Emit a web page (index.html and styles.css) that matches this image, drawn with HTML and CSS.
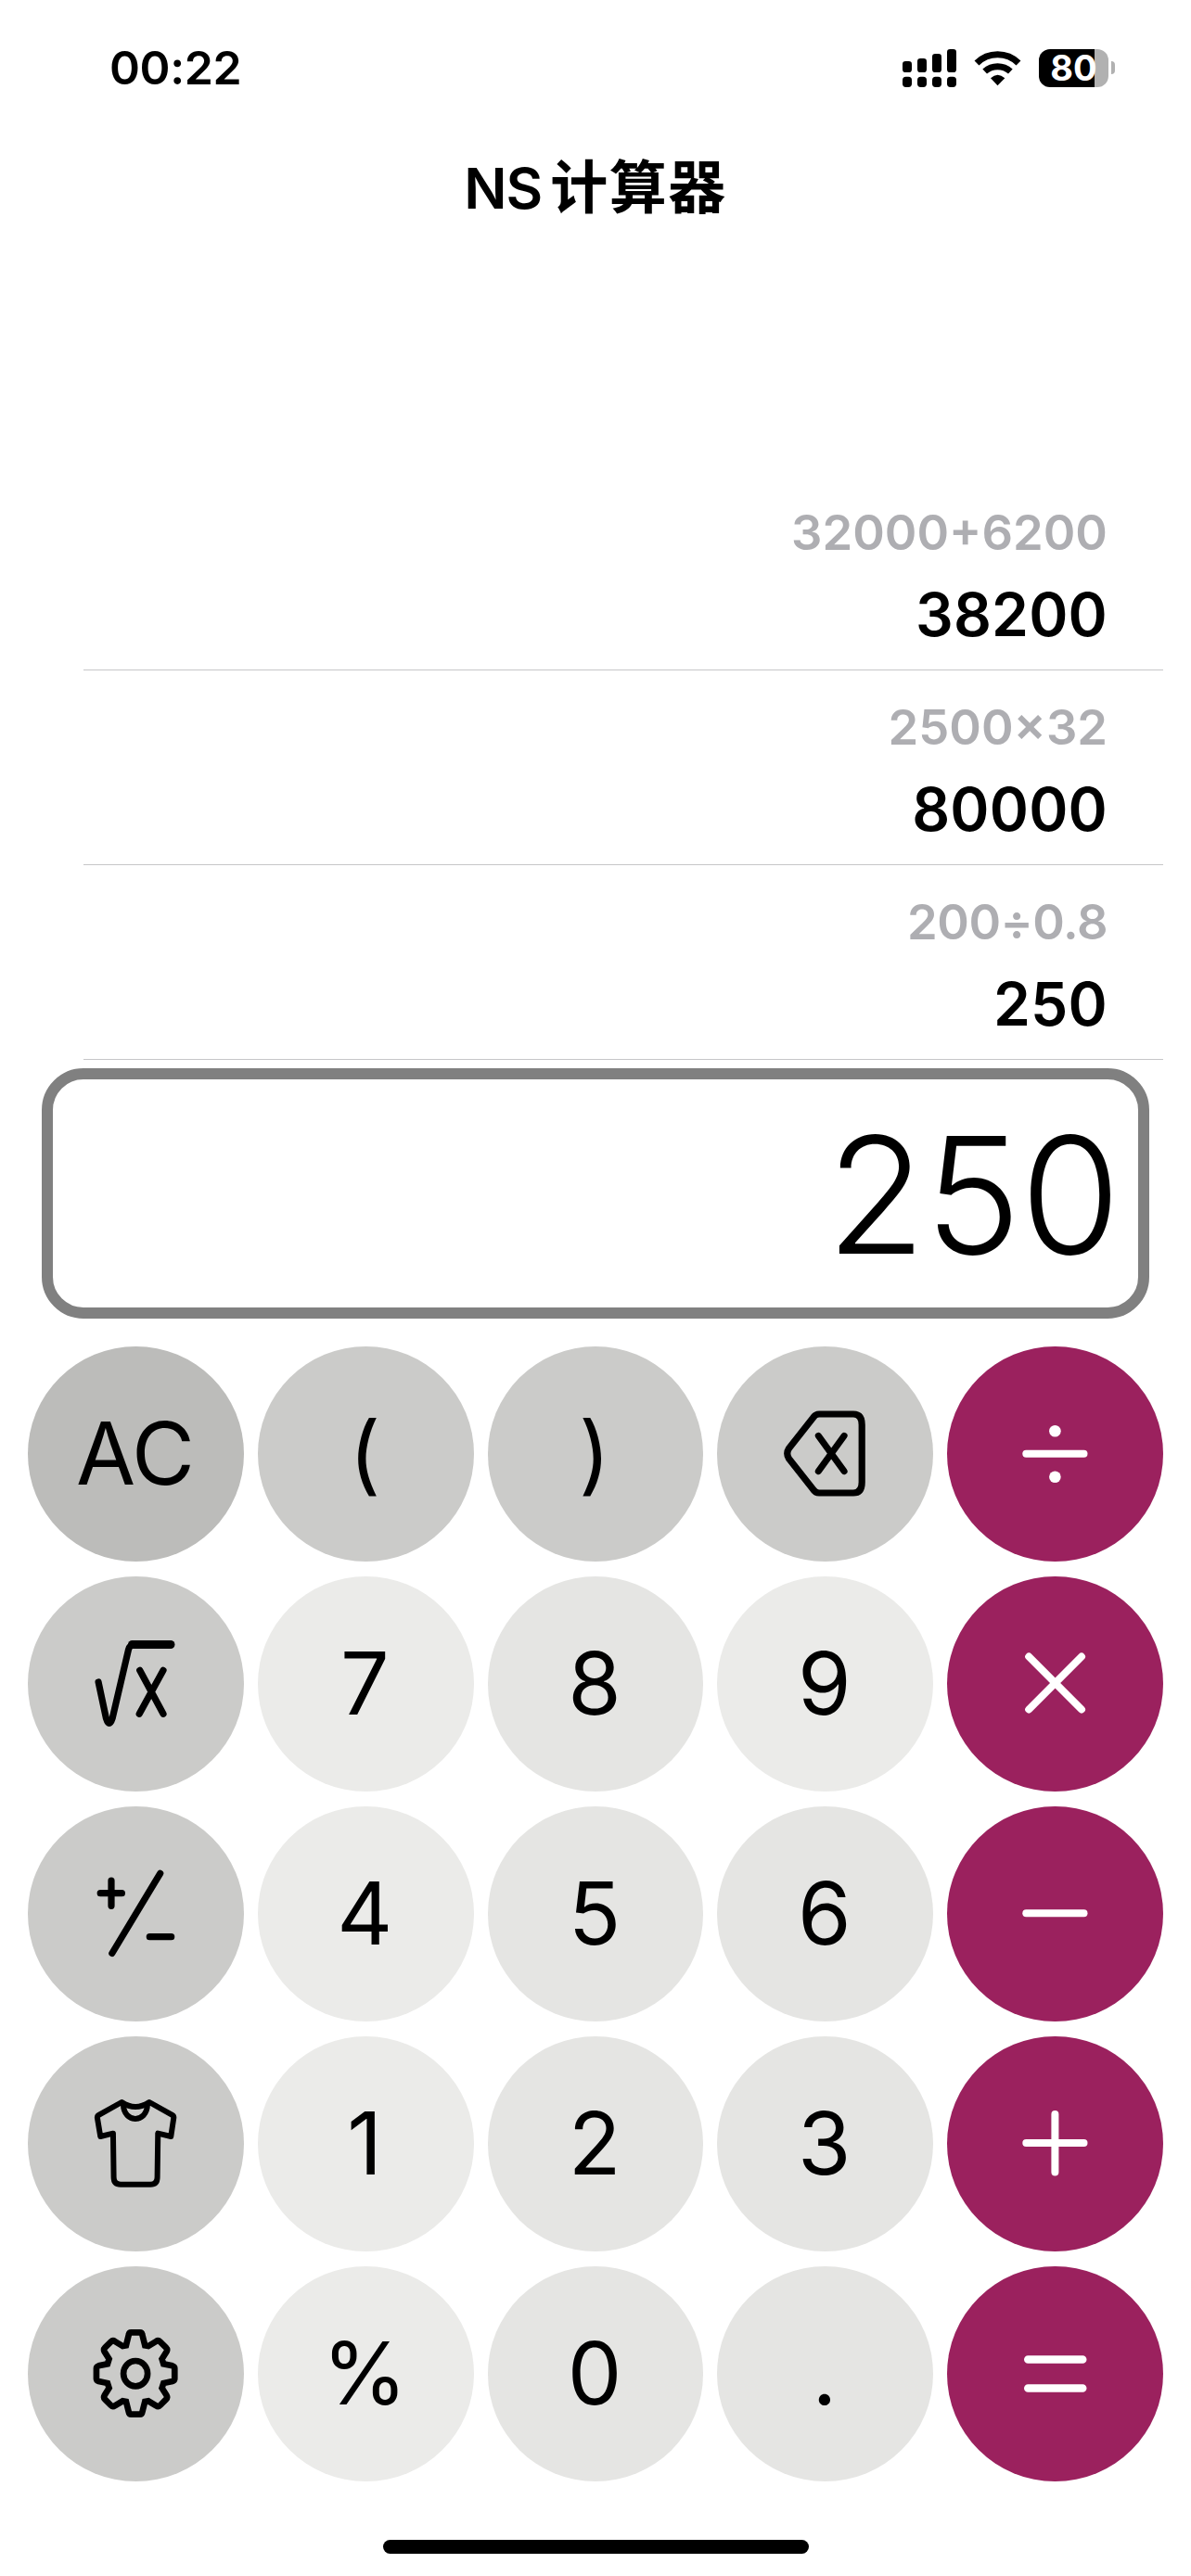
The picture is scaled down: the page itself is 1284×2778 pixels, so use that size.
FILE: index.html
```html
<!DOCTYPE html>
<html lang="zh-CN">
<head>
<meta charset="utf-8">
<title>NS计算器</title>
<link rel="stylesheet" href="styles.css">
</head>
<body>
<div class="phone">
  <header class="status">
    <span class="time">00:22</span>
    <div class="indicators">
      <svg class="signal" viewBox="99 66 174 123">
        <rect x="99" y="105" width="30" height="36" rx="10"/><rect x="147" y="96" width="30" height="45" rx="10"/>
        <rect x="195" y="81" width="30" height="60" rx="10"/><rect x="243" y="66" width="30" height="75" rx="10"/>
        <rect x="99" y="155" width="30" height="34" rx="11"/><rect x="147" y="155" width="30" height="34" rx="11"/>
        <rect x="195" y="155" width="30" height="34" rx="11"/><rect x="243" y="155" width="30" height="34" rx="11"/>
      </svg>
      <svg class="wifi" viewBox="330 66 153 123">
        <path class="arc" d="M339 111A96 96 0 0 1 474 111"/>
        <path class="arc" d="M365 138A62 62 0 0 1 448 138"/>
        <path d="M406.500 184L384 160Q406.500 138 430 160Z"/>
      </svg>
      <div class="battery"><div class="cell"><span>80</span></div><div class="cap"></div></div>
    </div>
  </header>
  <h1 class="title"><span class="latin">NS</span><span class="han">计算器</span></h1>

  <ul class="history">
    <li><span class="expr">32000+6200</span><span class="result">38200</span></li>
    <li><span class="expr">2500×32</span><span class="result">80000</span></li>
    <li><span class="expr tight">200÷0.8</span><span class="result">250</span></li>
  </ul>

  <div class="display"><span>250</span></div>

  <main class="keypad">
    <button class="key clear"><span class="ac">AC</span></button>
    <button class="key fn"><span>(</span></button>
    <button class="key fn"><span>)</span></button>
    <button class="key fn" aria-label="delete"><svg viewBox="0 0 100 100"><path d="M43 7H80Q89.200 7 89.200 18.500V80.500Q89.200 92 80 92H43Q39 92 36.500 88L10.500 55Q7 49.500 10.500 44L36.500 11Q39 7 43 7Z"/><path d="M42.400 30.500L70 68.500M70 30.500L42.400 68.500"/></svg></button>
    <button class="key op" aria-label="divide"><svg viewBox="0 0 100 100"><path d="M18.300 49.700H80.500"/><circle class="dot" cx="49.400" cy="25.300" r="6.300"/><circle class="dot" cx="49.400" cy="74.700" r="6.300"/></svg></button>

    <button class="key fn" aria-label="square root"><svg viewBox="0 0 100 100"><path d="M10.100 48L18.400 87Q21.700 98 25.200 87L42.500 13Q43.700 8 48 8"/><path class="bar" d="M46.500 7.500H88"/><path d="M54.700 35.300L80 82.300M80 35.300L54.200 82.300"/></svg></button>
    <button class="key light"><span>7</span></button>
    <button class="key"><span>8</span></button>
    <button class="key light"><span>9</span></button>
    <button class="key op" aria-label="multiply"><svg viewBox="0 0 100 100"><path d="M21.200 20.500L78 77.500M78 20.500L21.200 77.500"/></svg></button>

    <button class="key fn" aria-label="sign"><svg viewBox="0 0 100 100"><path d="M12.200 27.700H35.400M24 14V41.300M76.700 6.300L24.800 92.500M65.300 74.700H88.700"/></svg></button>
    <button class="key light"><span>4</span></button>
    <button class="key"><span>5</span></button>
    <button class="key"><span>6</span></button>
    <button class="key op" aria-label="minus"><svg viewBox="0 0 100 100"><path d="M18.300 49.300H80.500"/></svg></button>

    <button class="key fn" aria-label="theme"><svg class="shirt" viewBox="49.200 96 300 300"><path d="M155 111Q199 141 244 111L317 152Q324 156 323 162L314 222L272 212L270 354Q270 377 248 377H151Q129 377 129 354L127 212L86 222L76 162Q75 156 82 152Z"/><path d="M160 119C162 180 236 180 238 119"/></svg></button>
    <button class="key light"><span>1</span></button>
    <button class="key"><span>2</span></button>
    <button class="key"><span>3</span></button>
    <button class="key op" aria-label="plus"><svg viewBox="0 0 100 100"><path d="M18.300 49H80.500M49.400 18V80.500"/></svg></button>

    <button class="key fn" aria-label="settings"><svg class="gear" viewBox="49.200 60 300 300"><path d="M185 76H214Q220 76 221 82L230 118L241 120L266 105Q273 100 279 106L298 125Q304 131 300 138L285 162L290 178L319 184Q326 186 326 192V226Q326 232 319 234L290 240L285 256L300 280Q304 287 298 293L279 312Q273 318 266 313L241 298L230 300L221 335Q220 341 214 341H185Q179 341 178 335L169 300L158 298L133 313Q126 318 120 312L101 293Q95 287 99 280L114 256L109 240L80 234Q73 232 73 226V192Q73 186 80 184L109 178L114 162L99 138Q95 131 101 125L120 106Q126 100 133 105L158 120L169 118L178 82Q179 76 185 76Z"/><ellipse cx="199.500" cy="209" rx="39" ry="41"/></svg></button>
    <button class="key light"><span>%</span></button>
    <button class="key"><span>0</span></button>
    <button class="key"><span>.</span></button>
    <button class="key op equals" aria-label="equals"><svg viewBox="0 0 100 100"><path d="M20.300 34.500H79.200M20.300 65.500H79.200"/></svg></button>
  </main>
  <div class="home"></div>
</div>
</body>
</html>
```
FILE: styles.css
```css
* { box-sizing: border-box; }
body { margin: 0; background: #fff; color: #000; font-family: Inter, "Noto Sans CJK SC", sans-serif; }
.phone { width: 1284px; height: 2778px; display: flex; flex-direction: column; overflow: hidden; }

.status { height: 146px; padding: 0 82px 0 118px; display: flex; align-items: center; justify-content: space-between; }
.time { font-size: 50px; font-weight: 600; line-height: 1; letter-spacing: -0.4px; }
.indicators { display: flex; align-items: center; }
.signal { width: 58px; height: 41px; margin-right: 19px; }
.wifi { width: 51px; height: 41px; margin-right: 19px; }
.arc { fill: none; stroke: #000; stroke-width: 21; }
.battery { display: flex; align-items: center; gap: 3px; }
.cell { width: 75px; height: 41px; border-radius: 12px; background: linear-gradient(90deg, #000 60px, #b1b1b1 60px); color: #fff; display: flex; align-items: center; justify-content: center; font-size: 38px; font-weight: 700; line-height: 1; }
.cap { width: 4px; height: 14px; border-radius: 0 4px 4px 0; background: #b1b1b1; }

.title { margin: 0; height: 114px; line-height: 114px; text-align: center; font-size: 61px; font-weight: 600; white-space: nowrap; }
.latin { letter-spacing: -1px; }
.han { font-family: "Noto Sans CJK SC", sans-serif; font-size: 62px; font-weight: 700; line-height: 1; margin-left: 9px; letter-spacing: 1.5px; }

.history { list-style: none; margin: 253px 30px 0 90px; padding: 0; }
.history li { height: 210px; padding: 27px 60px 0 0; border-bottom: 1px solid #c6c6c8; display: flex; flex-direction: column; align-items: flex-end; gap: 16px; }
.expr { font-size: 52.500px; line-height: 68px; font-weight: 600; color: #aeaeb2; }
.tight { letter-spacing: -0.5px; }
.result { font-size: 64px; line-height: 78px; font-weight: 600; letter-spacing: 0.2px; }

.display { margin: 9px 45px 0; height: 270px; border: 12px solid #808080; border-radius: 45px; padding: 2px 20px 0 0; display: flex; align-items: center; justify-content: flex-end; font-size: 175px; font-weight: 300; line-height: 1; letter-spacing: -1px; }

.keypad { margin: 30px 30px 0; display: grid; grid-template-columns: repeat(5, 1fr); grid-auto-rows: 232px; gap: 16px 15px; }
.key { border: 0; border-radius: 50%; padding: 0 0 2px; background: #e5e5e3; color: #000; display: flex; align-items: center; justify-content: center; font-family: inherit; font-size: 93px; font-weight: 400; line-height: 1; }
.key span { margin-right: 2px; }
.key .ac { letter-spacing: -1px; }
.key.light { background: #ebebe9; }
.key.fn { background: #cbcbc9; }
.key.clear { background: #bcbcba; }
.key.op { background: #9b215e; color: #fff; }
.key svg { width: 100px; height: 100px; margin-top: 2px; fill: none; stroke: currentColor; stroke-width: 7.200; stroke-linecap: round; stroke-linejoin: round; }
.key.op svg { stroke-width: 8; }
.key.equals svg { stroke-width: 8.600; }
.key .bar { stroke-width: 9; }
.key .dot { fill: currentColor; stroke: none; }
.key .shirt { stroke-width: 18; }
.key .gear { stroke-width: 20; stroke-linejoin: miter; }

.home { width: 459px; height: 15px; margin: 63px auto 0; border-radius: 8px; background: #000; }
```
